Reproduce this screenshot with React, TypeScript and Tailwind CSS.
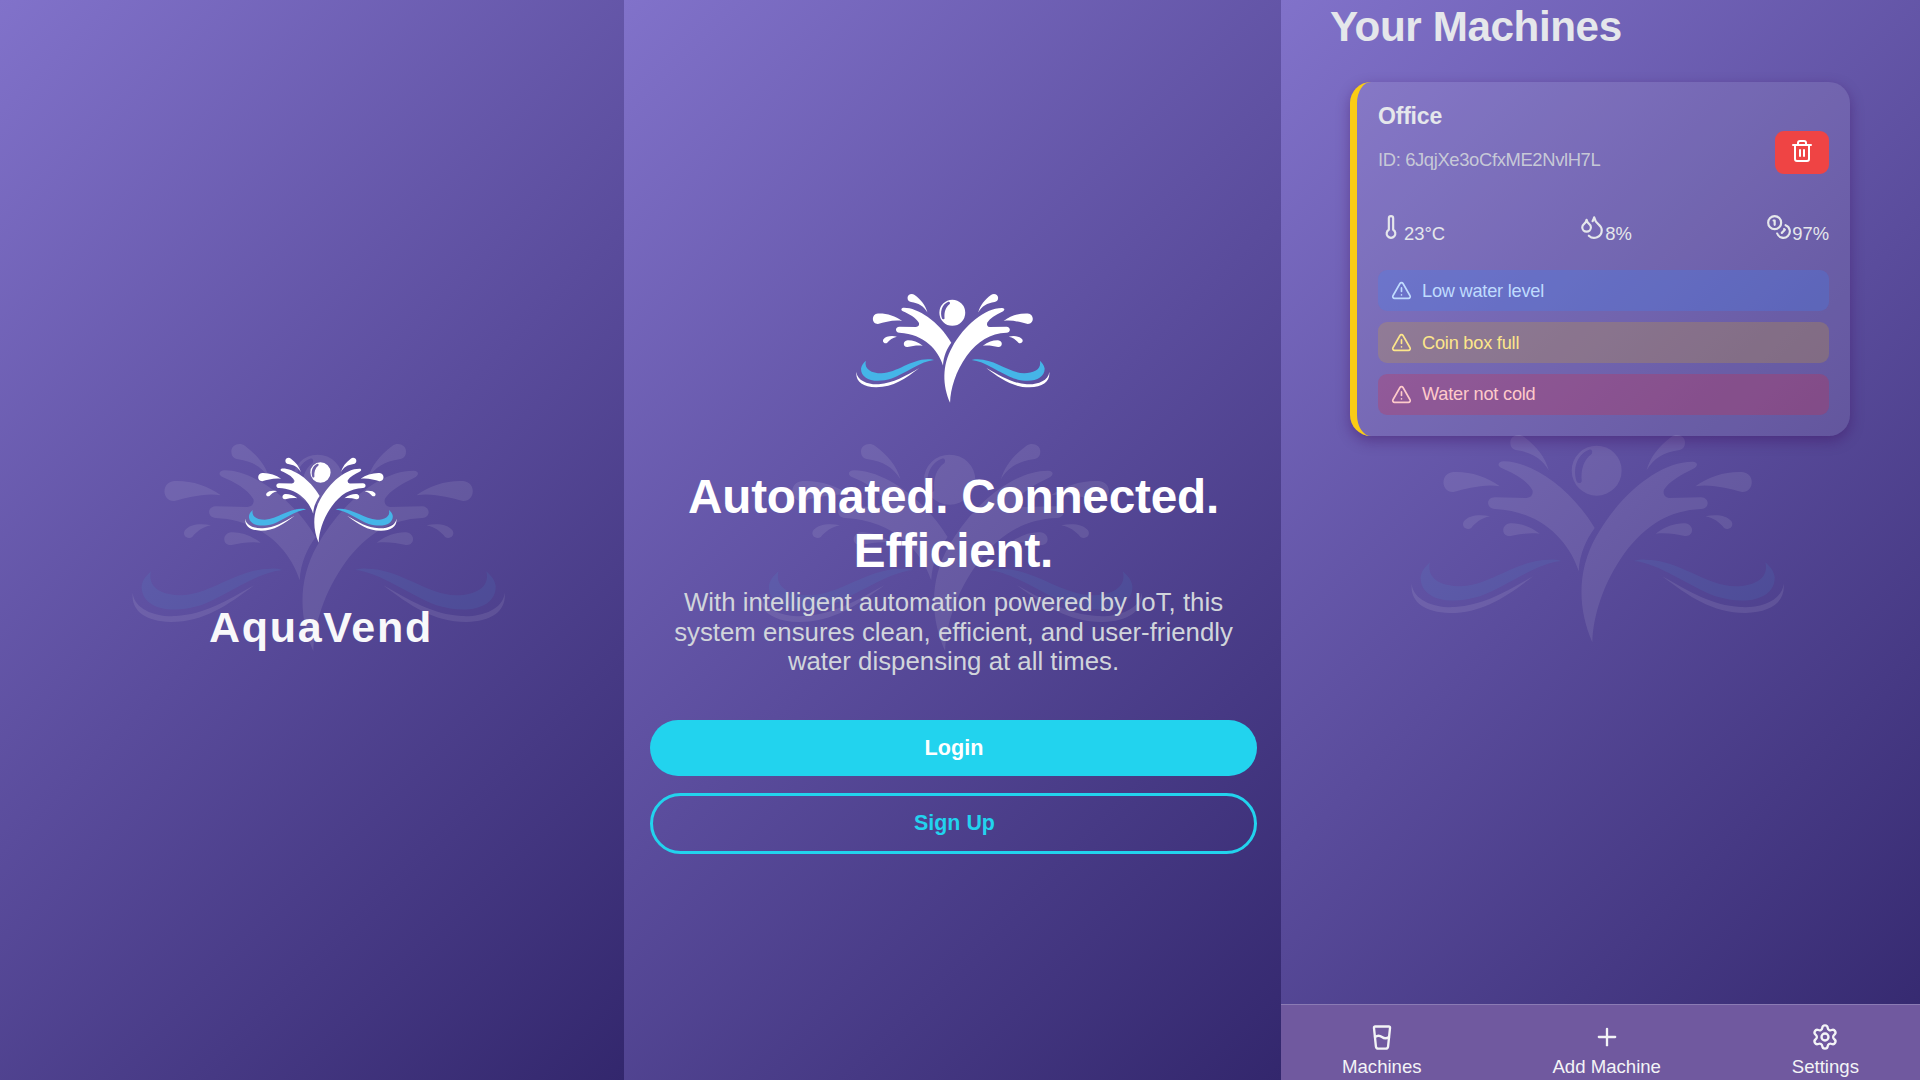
import React from "react";
import {
  Coins,
  Droplets,
  GlassWater,
  Plus,
  Settings,
  Thermometer,
  Trash2,
  TriangleAlert,
} from "lucide-react";

function LogoSide() {
  return (
    <>
      <path fill="#fff" d="M392 72 C388 50 415 38 433 52 C470 80 495 110 507 152 C485 115 455 98 412 92 C400 90 392 82 392 72Z" />
      <path fill="#fff" d="M360 200 C320 170 270 155 220 157 C180 160 182 218 220 217 C260 208 310 192 360 200Z" />
      <path fill="#fff" d="M330 290 C300 283 265 287 252 305 C242 322 262 334 274 325 C288 308 305 295 330 290Z" />
      <path fill="#fff" d="M480 342 C450 320 420 310 392 311 C362 314 364 352 392 349 C420 343 450 338 480 342Z" />
      <path fill="#45b5e8" d="M150 428 C138 478 185 500 240 500 C330 498 410 420 510 420 C530 419 535 422 545 424 C470 430 380 500 300 530 C200 560 120 535 122 472 C126 450 138 440 150 428Z" />
      <path fill="#fff" d="M95 492 C100 545 170 566 225 562 C310 558 380 515 460 470 C380 530 310 580 210 580 C130 578 90 545 95 492Z" />
    </>
  );
}

function Logo({ className }: { className: string }) {
  return (
    <svg viewBox="93 40 1124 630" preserveAspectRatio="none" className={className} aria-hidden="true">
      <LogoSide />
      <g transform="translate(1308 0) scale(-1 1)">
        <LogoSide />
      </g>
      <path fill="#fff" d="M372 125 C450 125 570 200 645 325 C620 360 600 400 597 455 C570 370 490 275 345 268 C318 265 318 234 345 233 L440 235 Q462 232 458 212 C440 180 400 160 365 145 C350 138 355 125 372 125Z" />
      <path fill="#fff" d="M940 126 C840 125 720 225 650 350 C590 455 595 570 638 668 C640 590 670 490 735 400 C800 315 870 272 965 268 C992 266 990 234 965 233 L868 235 Q848 232 853 210 C870 185 900 168 940 148 C958 138 955 127 940 126Z" />
      <path
        fill="#fff"
        fillRule="evenodd"
        d="M576 153 A75 75 0 1 1 726 153 A75 75 0 1 1 576 153Z M628 90 C590 105 578 150 592 188 C598 192 606 190 606 184 C603 150 612 120 636 103 C640 95 636 88 628 90Z"
      />
    </svg>
  );
}

const panel =
  "relative h-full overflow-hidden bg-[linear-gradient(135deg,#8172ca_0%,#5a4c9c_50%,#33276d_100%)]";

function Splash() {
  return (
    <section className={`${panel} flex w-[624px] flex-col items-center pt-[457px]`}>
      <Logo className="absolute left-[132px] top-[442px] h-[210px] w-[374px] opacity-[0.09]" />
      <Logo className="relative ml-[18px] h-[86px] w-[152px]" />
      <h1 className="relative ml-[18px] mt-[59px] text-[43px] font-bold leading-[50px] tracking-[1.7px] text-[#f8f8fa]">
        AquaVend
      </h1>
    </section>
  );
}

function Welcome() {
  return (
    <section className={`${panel} flex w-[657px] flex-col items-center pl-[26px] pr-[24px] pt-[293px]`}>
      <Logo className="absolute left-[135px] top-[442px] h-[210px] w-[384px] opacity-[0.09]" />
      <Logo className="relative -ml-[1px] h-[110px] w-[194px]" />
      <h2 className="relative mt-[67px] text-center text-[47.7px] font-bold leading-[54px] tracking-[-0.2px] text-white">
        Automated. Connected.
        <br />
        Efficient.
      </h2>
      <p className="relative mt-[10px] whitespace-nowrap text-center text-[25.8px] leading-[29.5px] text-[#d1d5db]">
        With intelligent automation powered by IoT, this
        <br />
        system ensures clean, efficient, and user-friendly
        <br />
        water dispensing at all times.
      </p>
      <button className="relative mt-[43px] h-[56px] w-full shrink-0 rounded-full bg-[#22d3ee] pl-[1px] text-[21.6px] font-bold leading-none text-white">
        Login
      </button>
      <button className="relative mt-[17px] h-[61.5px] w-full shrink-0 rounded-full border-[3px] border-[#22d3ee] pl-[2px] text-[21.4px] font-bold leading-none text-[#22d3ee]">
        Sign Up
      </button>
    </section>
  );
}

function Stat({ icon, value }: { icon: React.ReactNode; value: string }) {
  return (
    <div className="flex items-start">
      {icon}
      <span className="pt-[10px] text-[18.4px] leading-[20px]">{value}</span>
    </div>
  );
}

function Alert({ className, text }: { className: string; text: string }) {
  return (
    <div className={`flex h-[41.3px] items-center gap-[10px] rounded-[9px] pl-[13px] ${className}`}>
      <TriangleAlert size={21} strokeWidth={1.9} />
      <span className="pt-[0.5px] text-[18.2px] leading-[20px] tracking-[-0.22px]">{text}</span>
    </div>
  );
}

function NavItem({ icon, label }: { icon: React.ReactNode; label: string }) {
  return (
    <div className="flex flex-col items-center gap-[5px]">
      {icon}
      <span className="text-[18.6px] leading-[21px]">{label}</span>
    </div>
  );
}

function Machines() {
  return (
    <section className={`${panel} flex w-[639px] flex-col justify-between`}>
      <Logo className="absolute left-[130px] top-[433px] h-[210px] w-[374px] opacity-[0.09]" />
      <div className="relative">
        <h2 className="ml-[49px] mt-[2px] text-[42.2px] font-bold leading-[50px] tracking-[-0.4px] text-[#e5e7eb]">
          Your Machines
        </h2>
        <article className="ml-[69px] mt-[30px] h-[353.5px] w-[500px] rounded-[21px] border-l-[7px] border-[#facc15] bg-white/[0.09] pl-[21px] pr-[21px] shadow-[0_5px_14px_rgba(60,10,90,0.4)]">
          <div className="flex h-[132px] justify-between">
            <div className="pt-[21px]">
              <h3 className="text-[23px] font-bold leading-[26px] tracking-[-0.2px] text-[#e5e7eb]">Office</h3>
              <p className="mt-[20px] text-[18.4px] leading-[22px] tracking-[-0.36px] text-[#d1d5db]/90">
                ID: 6JqjXe3oCfxME2NvlH7L
              </p>
            </div>
            <button className="mt-[49px] flex h-[42.5px] w-[54.5px] items-center justify-center rounded-[9px] bg-[#ef4444] pb-[3px] text-white">
              <Trash2 size={24} strokeWidth={2} />
            </button>
          </div>
          <div className="flex h-[56px] items-start justify-between text-[#e5e7eb]">
            <Stat icon={<Thermometer size={26} strokeWidth={2} />} value="23°C" />
            <Stat icon={<Droplets size={26} strokeWidth={2} />} value="8%" />
            <Stat icon={<Coins size={26} strokeWidth={2} />} value="97%" />
          </div>
          <div className="flex flex-col gap-[10.5px]">
            <Alert className="bg-[#3b82f6]/25 text-[#bfdbfe]" text="Low water level" />
            <Alert className="bg-[#eab308]/20 text-[#fde68a]" text="Coin box full" />
            <Alert className="bg-[#dc2640]/25 text-[#fecaca]" text="Water not cold" />
          </div>
        </article>
      </div>
      <nav className="relative flex h-[76px] items-start justify-between border-t border-[#8b7bb4] bg-[#70599f] pl-[61px] pr-[61px] pt-[18px] text-[#f3f4f6]">
        <NavItem icon={<GlassWater size={28} strokeWidth={2} />} label="Machines" />
        <NavItem icon={<Plus size={28} strokeWidth={2} />} label="Add Machine" />
        <NavItem icon={<Settings size={28} strokeWidth={2} />} label="Settings" />
      </nav>
    </section>
  );
}

export default function App() {
  return (
    <main className="flex h-[1080px] w-[1920px] overflow-hidden font-['Liberation_Sans',Arial,sans-serif]">
      <Splash />
      <Welcome />
      <Machines />
    </main>
  );
}
